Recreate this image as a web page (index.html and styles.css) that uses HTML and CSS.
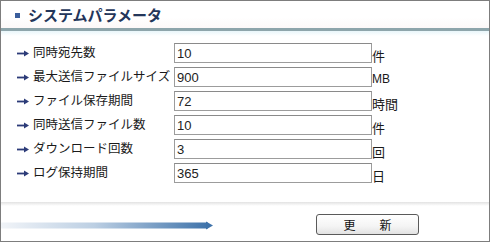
FILE: index.html
```html
<!DOCTYPE html>
<html lang="ja">
<head>
<meta charset="utf-8">
<link rel="stylesheet" href="styles.css">
</head>
<body>
<div class="panel">
  <div class="header">
    <span class="bullet"></span>
    <h1 class="title">システムパラメータ</h1>
  </div>
  <div class="rule"></div>
  <div class="rule-glow"></div>
  <div class="form">
    <div class="row"><svg class="arrow" width="12" height="7" viewBox="0 0 12 7"><rect x="0" y="2.6" width="8" height="1.8" fill="#2c3b78"/><polygon points="7,0.5 12,3.5 7,6.5" fill="#2c3b78"/></svg><span class="label">同時宛先数</span><input class="field" type="text" value="10"><span class="unit">件</span></div>
    <div class="row"><svg class="arrow" width="12" height="7" viewBox="0 0 12 7"><rect x="0" y="2.6" width="8" height="1.8" fill="#2c3b78"/><polygon points="7,0.5 12,3.5 7,6.5" fill="#2c3b78"/></svg><span class="label">最大送信ファイルサイズ</span><input class="field" type="text" value="900"><span class="unit latin">MB</span></div>
    <div class="row"><svg class="arrow" width="12" height="7" viewBox="0 0 12 7"><rect x="0" y="2.6" width="8" height="1.8" fill="#2c3b78"/><polygon points="7,0.5 12,3.5 7,6.5" fill="#2c3b78"/></svg><span class="label">ファイル保存期間</span><input class="field" type="text" value="72"><span class="unit">時間</span></div>
    <div class="row"><svg class="arrow" width="12" height="7" viewBox="0 0 12 7"><rect x="0" y="2.6" width="8" height="1.8" fill="#2c3b78"/><polygon points="7,0.5 12,3.5 7,6.5" fill="#2c3b78"/></svg><span class="label">同時送信ファイル数</span><input class="field" type="text" value="10"><span class="unit">件</span></div>
    <div class="row"><svg class="arrow" width="12" height="7" viewBox="0 0 12 7"><rect x="0" y="2.6" width="8" height="1.8" fill="#2c3b78"/><polygon points="7,0.5 12,3.5 7,6.5" fill="#2c3b78"/></svg><span class="label">ダウンロード回数</span><input class="field" type="text" value="3"><span class="unit">回</span></div>
    <div class="row"><svg class="arrow" width="12" height="7" viewBox="0 0 12 7"><rect x="0" y="2.6" width="8" height="1.8" fill="#2c3b78"/><polygon points="7,0.5 12,3.5 7,6.5" fill="#2c3b78"/></svg><span class="label">ログ保持期間</span><input class="field" type="text" value="365"><span class="unit">日</span></div>
  </div>
  <div class="separator"></div>
  <div class="footer">
    <svg class="progress" width="212" height="9" viewBox="0 0 212 9">
      <defs>
        <linearGradient id="bar" x1="0" y1="0" x2="1" y2="0">
          <stop offset="0" stop-color="#f1f4f8"/>
          <stop offset="0.45" stop-color="#bccfe3"/>
          <stop offset="1" stop-color="#3f73aa"/>
        </linearGradient>
      </defs>
      <rect x="0" y="1.5" width="207" height="6" fill="url(#bar)"/>
      <polygon points="205,0.5 212,4.5 205,8.5" fill="#3f73aa"/>
    </svg>
    <button class="btn" type="button">更　新</button>
  </div>
</div>
</body>
</html>
```
FILE: styles.css
```css
html, body {
  margin: 0;
  padding: 0;
  background: #ffffff;
}

.panel {
  width: 490px;
  height: 242px;
  box-sizing: border-box;
  border: 1px solid #7d7d7d;
  display: flex;
  flex-direction: column;
  background: #ffffff;
  font-family: "Noto Sans CJK JP", "Liberation Sans", sans-serif;
}

.header {
  height: 27px;
  display: flex;
  align-items: center;
  padding-left: 14px;
  background: linear-gradient(to bottom, #ffffff 0%, #ffffff 60%, #fdf8f8 100%);
}

.bullet {
  width: 5px;
  height: 5px;
  background: #3b5e9c;
  margin-right: 8px;
  margin-top: 1px;
}

.title {
  margin: 0;
  font-size: 15px;
  font-weight: 700;
  color: #24365a;
  line-height: 1;
}

.rule {
  height: 3px;
  background: #8ea5ab;
}

.rule-glow {
  height: 5px;
  background: linear-gradient(to bottom, #e9f6fa, #ffffff);
}

.form {
  display: flex;
  flex-direction: column;
  gap: 4px;
  padding-top: 7px;
}

.row {
  display: flex;
  align-items: center;
  height: 20px;
}

.arrow {
  display: block;
  margin-left: 16px;
  margin-right: 4px;
}

.label {
  width: 141px;
  font-size: 12.5px;
  color: #1a1a1a;
  line-height: 1;
  margin-top: -2px;
}

.field {
  width: 198px;
  height: 20px;
  box-sizing: border-box;
  margin: 0;
  padding: 0 2px;
  border: 1px solid #9c9c9c;
  border-top-color: #8a8a8a;
  background: #ffffff;
  font-family: "Liberation Sans", sans-serif;
  font-size: 13px;
  color: #222222;
  outline: none;
}

.unit {
  font-size: 13px;
  color: #1a1a1a;
  line-height: 1;
  align-self: flex-end;
  margin-bottom: 1px;
}

.unit.latin {
  font-family: "Liberation Sans", sans-serif;
  font-size: 12px;
  margin-bottom: 2px;
}

.separator {
  margin-top: 19px;
  height: 4px;
  background: linear-gradient(to bottom, #e2e2e2, #f7f7f7 70%, #ffffff);
}

.footer {
  display: flex;
  align-items: flex-start;
  padding-top: 8px;
}

.progress {
  display: block;
  margin-top: 7px;
}

.btn {
  margin-left: 103px;
  width: 103px;
  height: 21px;
  box-sizing: border-box;
  border: 1px solid #5a5a5a;
  border-radius: 3px;
  background: linear-gradient(to bottom, #ffffff 0%, #f4f4f4 60%, #e2e2e2 100%);
  font-family: "Noto Sans CJK JP", sans-serif;
  font-size: 12px;
  color: #111111;
  letter-spacing: 6px;
  padding: 0 0 0 6px;
  line-height: 1;
}
```
